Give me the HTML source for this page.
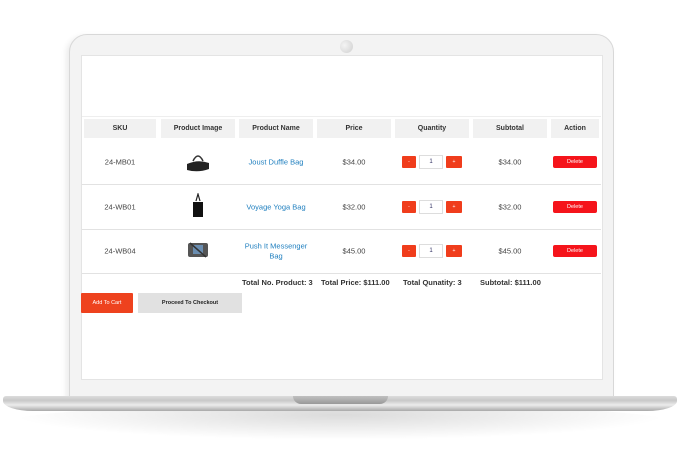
<!DOCTYPE html>
<html><head><style>
body{margin:0;width:680px;height:450px;background:#fff;position:relative;overflow:hidden;font-family:"Liberation Sans",sans-serif;}
.lid{position:absolute;left:69px;top:34px;width:543px;height:370px;background:#f3f3f3;border:1px solid #d8d8d8;border-radius:18px 18px 0 0;box-shadow:-3px 2px 6px rgba(0,0,0,.08);}
.cam{position:absolute;left:340px;top:40px;width:13px;height:13px;border-radius:50%;background:radial-gradient(circle at 35% 40%,#f4f4f4,#cfcfcf);}
.scr{position:absolute;left:81px;top:55px;width:520px;height:323px;background:#fff;border:1px solid #e4e4e4;}
.hd{position:absolute;top:119px;height:19px;background:#f1f1f1;font-size:7px;font-weight:bold;color:#333;text-align:center;line-height:19px;}
.t{position:absolute;font-size:7.5px;color:#444;text-align:center;transform:translate(-50%,-50%);white-space:nowrap;}
.n{color:#1f7fbf;}
.sep{position:absolute;left:82px;width:519px;height:1px;background:#e2e2e2;}
.btn{position:absolute;height:12px;background:#f03d1c;border-radius:1px;color:#fff;font-size:5px;text-align:center;line-height:12px;}
.qty{position:absolute;width:22px;height:12px;border:1px solid #ddd;background:#fff;font-size:6px;text-align:center;line-height:13px;color:#336;}
.del{position:absolute;left:553px;width:44px;height:12px;background:#f5141b;border-radius:2px;color:#fff;font-size:5.5px;text-align:center;line-height:13px;}
.tot{position:absolute;top:278px;font-size:7.5px;font-weight:bold;color:#333;white-space:nowrap;}
.base{position:absolute;left:3px;top:396px;width:674px;height:15px;background:linear-gradient(#dcdcdc,#c8c8c8 30%,#ececec 60%,#a8a8a8);border-radius:3px 3px 30px 30px/3px 3px 10px 10px;}
.notch{position:absolute;left:293px;top:396px;width:95px;height:8px;background:linear-gradient(#c0c0c0,#999);border-radius:0 0 8px 8px;}
.shadow{position:absolute;left:10px;top:404px;width:660px;height:36px;border-radius:50%;background:radial-gradient(ellipse at 50% 30%,rgba(0,0,0,.14),rgba(0,0,0,0) 70%);}
</style></head><body>
<div class="shadow"></div>
<div class="lid"></div>
<div class="cam"></div>
<div class="scr"></div>
<div class="sep" style="top:116px;background:#eee"></div>
<div class="hd" style="left:84px;width:72px">SKU</div>
<div class="hd" style="left:161px;width:74px">Product Image</div>
<div class="hd" style="left:239px;width:74px">Product Name</div>
<div class="hd" style="left:317px;width:74px">Price</div>
<div class="hd" style="left:395px;width:74px">Quantity</div>
<div class="hd" style="left:473px;width:74px">Subtotal</div>
<div class="hd" style="left:551px;width:48px">Action</div>

<div class="t" style="left:120px;top:162px">24-MB01</div>
<svg style="position:absolute;left:185px;top:151px" width="26" height="22" viewBox="0 0 26 22"><path d="M8 10 Q13 0 18 10" stroke="#333" stroke-width="1.5" fill="none"/><path d="M2 13 Q13 8 24 12 L24 18 Q13 22 2 19 Z" fill="#222"/></svg>
<div class="t n" style="left:276px;top:162px">Joust Duffle Bag</div>
<div class="t" style="left:354px;top:162px">$34.00</div>
<div class="btn" style="left:402px;top:156px;width:14px">-</div><div class="qty" style="left:419px;top:155px">1</div><div class="btn" style="left:446px;top:156px;width:16px">+</div>
<div class="t" style="left:510px;top:162px">$34.00</div>
<div class="del" style="top:156px">Delete</div>
<div class="sep" style="top:184px"></div>

<div class="t" style="left:120px;top:207px">24-WB01</div>
<svg style="position:absolute;left:190px;top:193px" width="16" height="26" viewBox="0 0 16 26"><path d="M6 8 L8 1 L10 8" stroke="#222" stroke-width="1.2" fill="none"/><path d="M3 9 L13 9 L13 24 L3 24 Z" fill="#111"/></svg>
<div class="t n" style="left:276px;top:207px">Voyage Yoga Bag</div>
<div class="t" style="left:354px;top:207px">$32.00</div>
<div class="btn" style="left:402px;top:201px;width:14px">-</div><div class="qty" style="left:419px;top:200px">1</div><div class="btn" style="left:446px;top:201px;width:16px">+</div>
<div class="t" style="left:510px;top:207px">$32.00</div>
<div class="del" style="top:201px">Delete</div>
<div class="sep" style="top:229px"></div>

<div class="t" style="left:120px;top:251px">24-WB04</div>
<svg style="position:absolute;left:186px;top:240px" width="24" height="20" viewBox="0 0 24 20"><rect x="2" y="3" width="20" height="14" rx="2" fill="#555"/><rect x="7" y="5" width="10" height="9" fill="#6a8db0"/><path d="M4 3 L20 17" stroke="#333" stroke-width="1.5"/></svg>
<div class="t n" style="left:276px;top:246px">Push It Messenger</div>
<div class="t n" style="left:276px;top:256px">Bag</div>
<div class="t" style="left:354px;top:251px">$45.00</div>
<div class="btn" style="left:402px;top:245px;width:14px">-</div><div class="qty" style="left:419px;top:244px">1</div><div class="btn" style="left:446px;top:245px;width:16px">+</div>
<div class="t" style="left:510px;top:251px">$45.00</div>
<div class="del" style="top:245px">Delete</div>
<div class="sep" style="top:273px"></div>

<div class="tot" style="left:242px">Total No. Product: 3</div>
<div class="tot" style="left:321px">Total Price: $111.00</div>
<div class="tot" style="left:403px">Total Qunatity: 3</div>
<div class="tot" style="left:480px">Subtotal: $111.00</div>

<div style="position:absolute;left:81px;top:293px;width:52px;height:20px;background:#ee421e;color:#fff;font-size:5.5px;text-align:center;line-height:20px;border-radius:1px">Add To Cart</div>
<div style="position:absolute;left:138px;top:293px;width:104px;height:20px;background:#e1e1e1;color:#222;font-size:5.5px;font-weight:bold;text-align:center;line-height:20px">Proceed To Checkout</div>

<div class="base"></div>
<div class="notch"></div>
</body></html>
